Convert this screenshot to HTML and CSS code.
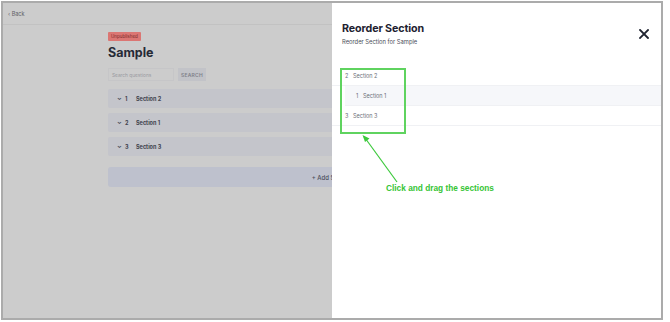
FILE: index.html
```html
<!DOCTYPE html>
<html>
<head>
<meta charset="utf-8">
<link rel="stylesheet" href="styles.css">
</head>
<body>
<div class="frame">
  <div class="page">
    <div class="topbar"><span class="back">&lsaquo; Back</span></div>
    <div class="content">
      <span class="badge">Unpublished</span>
      <h1 class="title">Sample</h1>
      <div class="search">
        <div class="search-input">Search questions</div>
        <div class="search-btn">SEARCH</div>
      </div>
      <div class="rows">
        <div class="row"><span class="chev">&#8964;</span><span class="num">1</span><span class="name">Section 2</span></div>
        <div class="row"><span class="chev">&#8964;</span><span class="num">2</span><span class="name">Section 1</span></div>
        <div class="row"><span class="chev">&#8964;</span><span class="num">3</span><span class="name">Section 3</span></div>
      </div>
      <div class="add">+ Add Section</div>
    </div>
  </div>
  <aside class="drawer">
    <div class="drawer-head">
      <div>
        <h2 class="drawer-title">Reorder Section</h2>
        <p class="drawer-sub">Reorder Section for Sample</p>
      </div>
      <svg class="close" width="10" height="10" viewBox="0 0 10 10"><path d="M1 1L9 9M9 1L1 9" stroke="#1f2330" stroke-width="1.8" stroke-linecap="square"/></svg>
    </div>
    <div class="list">
      <div class="item"><span class="inum">2</span><span>Section 2</span></div>
      <div class="item drag"><span class="inum">1</span><span>Section 1</span></div>
      <div class="item last"><span class="inum">3</span><span>Section 3</span></div>
    </div>
    <div class="hl-box"></div>
    <svg class="arrow" width="40" height="50" viewBox="0 0 40 50"><path d="M35 47L2 1.5" stroke="#3cc93c" stroke-width="1.2" fill="none"/><path d="M0.5 0L7.5 3.5L3 7Z" fill="#3cc93c"/></svg>
    <div class="note">Click and drag the sections</div>
  </aside>
</div>
</body>
</html>
```
FILE: styles.css
```css
* { box-sizing: border-box; }
html, body { margin: 0; padding: 0; background: #ffffff; }
body { width: 670px; height: 322px; overflow: hidden; font-family: Inter, "Liberation Sans", sans-serif; }

.frame {
  position: relative;
  margin: 1px 0 0 1px;
  width: 662px;
  height: 319px;
  border: 2px solid #ababab;
  background: #cccccc;
  overflow: hidden;
}

.page { width: 100%; height: 100%; background: #cccccc; }
.topbar {
  height: 22px;
  border-bottom: 1px solid #c2c2c2;
  display: flex;
  align-items: center;
  padding-left: 5px;
}
.back { font-size: 5.5px; color: #5c5e66; }

.content { padding: 7px 105px 0 105px; display: flex; flex-direction: column; align-items: flex-start; }
.badge {
  background: #db7673;
  color: #7a2a2a;
  font-size: 4.5px;
  padding: 2px 3px;
  border-radius: 1px;
  line-height: 5px;
  height: 9px;
}
.title { margin: 4px 0 0; font-size: 12.5px; font-weight: 700; color: #262a36; line-height: 16px; }
.search { display: flex; gap: 4px; margin-top: 7px; }
.search-input {
  width: 66px; height: 13px;
  border: 1px solid #c6c6c8;
  font-size: 4.8px; color: #9a9ba1;
  padding: 0 3px; display: flex; align-items: center;
}
.search-btn {
  width: 28px; height: 13px;
  background: #c2c3c8; color: #7f818a;
  font-size: 5px; font-weight: 600; letter-spacing: 0.2px;
  display: flex; align-items: center; justify-content: center;
}
.rows { display: flex; flex-direction: column; gap: 5px; margin-top: 8px; width: 100%; }
.row {
  height: 19px; width: 100%;
  background: #c4c5cb;
  border-radius: 2px;
  display: flex; align-items: center;
  padding-left: 9px;
  font-size: 5.5px; color: #41444f; font-weight: 700;
}
.chev { font-size: 6px; width: 8px; line-height: 1; position: relative; top: -1px; }
.num { width: 11px; }
.add {
  margin-top: 11px;
  width: 100%; height: 20px;
  background: #bec1cd;
  border-radius: 3px;
  display: flex; align-items: center; justify-content: center;
  font-size: 6px; color: #4a4d5a; font-weight: 500;
}

.drawer {
  position: absolute;
  top: 0; right: 0; bottom: 0;
  width: 329px;
  background: #ffffff;
}
.drawer-head {
  display: flex; justify-content: space-between; align-items: flex-start;
  padding: 19px 12px 0 10px;
}
.drawer-title { margin: 0; font-size: 10.7px; font-weight: 700; color: #1d2130; line-height: 14px; letter-spacing: -0.1px; }
.drawer-sub { margin: 2px 0 0; font-size: 5.8px; color: #4a4d57; line-height: 8px; }
.close { margin-top: 7px; }

.list { margin-top: 20px; }
.item {
  height: 20px;
  display: flex; align-items: center;
  padding-left: 13px;
  font-size: 5.5px; color: #6b6e78;
  border-bottom: 1px solid #f0f1f4;
}
.inum { width: 8px; }
.item.drag { margin-left: 13px; background: #f6f7fa; padding-left: 11px; }
.item.drag .inum { width: 7px; }

.hl-box {
  position: absolute;
  left: 8px; top: 65px;
  width: 66px; height: 66px;
  border: 2px solid #5fd35f;
}
.arrow { position: absolute; left: 30px; top: 132px; }
.note {
  position: absolute;
  left: 54px; top: 180px;
  font-family: "Liberation Sans", Arial, sans-serif;
  font-weight: 700; font-size: 8.3px;
  color: #35c435;
}
```
